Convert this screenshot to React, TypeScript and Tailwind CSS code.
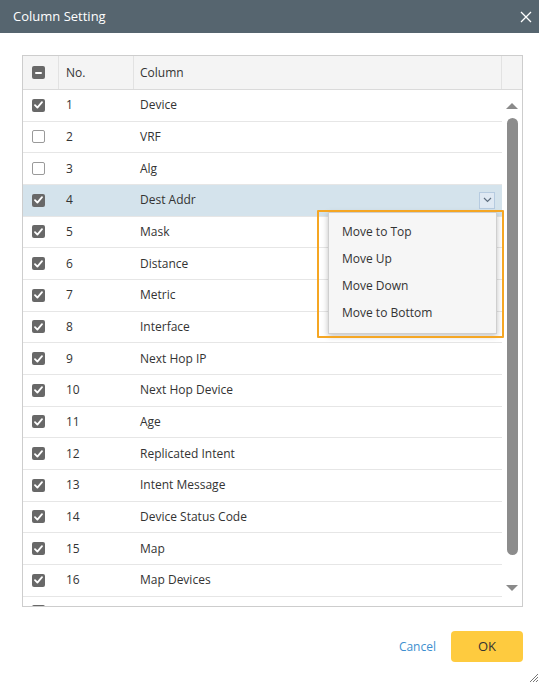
import React from 'react';

const rows: { no: number; name: string; checked: boolean }[] = [
  { no: 1, name: 'Device', checked: true },
  { no: 2, name: 'VRF', checked: false },
  { no: 3, name: 'Alg', checked: false },
  { no: 4, name: 'Dest Addr', checked: true },
  { no: 5, name: 'Mask', checked: true },
  { no: 6, name: 'Distance', checked: true },
  { no: 7, name: 'Metric', checked: true },
  { no: 8, name: 'Interface', checked: true },
  { no: 9, name: 'Next Hop IP', checked: true },
  { no: 10, name: 'Next Hop Device', checked: true },
  { no: 11, name: 'Age', checked: true },
  { no: 12, name: 'Replicated Intent', checked: true },
  { no: 13, name: 'Intent Message', checked: true },
  { no: 14, name: 'Device Status Code', checked: true },
  { no: 15, name: 'Map', checked: true },
  { no: 16, name: 'Map Devices', checked: true },
  { no: 17, name: '', checked: true },
];

const menuItems = ['Move to Top', 'Move Up', 'Move Down', 'Move to Bottom'];

// checkbox in the table, gray fill when checked
const Checkbox = ({ state }: { state: 'on' | 'off' | 'mixed' }) => {
  if (state === 'off') {
    return <div className="w-[13px] h-[13px] rounded-[2px] border border-[#9a9a9a] bg-white" />;
  }
  return (
    <div className="w-[13px] h-[13px] rounded-[2px] bg-[#686868] flex items-center justify-center">
      {state === 'on' ? (
        <svg width="9" height="8" viewBox="0 0 9 8" fill="none">
          <path d="M1 4.2 L3.4 6.6 L8 1.2" stroke="white" strokeWidth="1.8" strokeLinecap="round" strokeLinejoin="round" />
        </svg>
      ) : (
        <div className="w-[7px] h-[2px] bg-white rounded-[1px]" />
      )}
    </div>
  );
};

export default function App() {
  return (
    <div
      className="relative w-[539px] h-[683px] bg-white overflow-hidden text-[#333] text-[12px]"
      style={{ fontFamily: '"Open Sans", "Noto Sans", sans-serif' }}
    >
      {/* title bar */}
      <div className="h-[33px] bg-[#56656f] flex items-center justify-between pl-[13px] pr-[7px]">
        <span className="text-white text-[13px]">Column Setting</span>
        <svg width="12" height="12" viewBox="0 0 12 12" fill="none">
          <path d="M1 1 L11 11 M11 1 L1 11" stroke="white" strokeWidth="1.3" />
        </svg>
      </div>

      <div className="pl-[22px] pr-[16px] pt-[22px]">
        {/* table */}
        <div className="h-[552px] border border-[#cdcdcd] flex flex-col">
          <div className="h-[34px] shrink-0 flex bg-[#f4f4f4] border-b border-[#dadada]">
            <div className="w-[36px] flex items-center pl-[9px] border-r border-[#e2e2e2]">
              <Checkbox state="mixed" />
            </div>
            <div className="w-[75px] flex items-center pl-[7px] border-r border-[#e2e2e2]">No.</div>
            <div className="flex-1 flex items-center pl-[6px] border-r border-[#e2e2e2]">Column</div>
            <div className="w-[20px]" />
          </div>

          <div className="flex-1 flex min-h-0">
            <div className="flex-1 overflow-hidden">
              {rows.map((r) => (
                <div
                  key={r.no}
                  className={`h-[31.67px] flex border-b border-[#e6e6e6] ${r.no === 4 ? 'bg-[#d4e3ec]' : 'bg-white'}`}
                >
                  <div className="w-[36px] flex items-center pl-[9px]">
                    <Checkbox state={r.checked ? 'on' : 'off'} />
                  </div>
                  <div className="w-[75px] flex items-center pl-[7px]">{r.name ? r.no : ''}</div>
                  <div className="flex-1 flex items-center pl-[6px] pr-[7px] justify-between">
                    <span>{r.name}</span>
                    {r.no === 4 && (
                      <div className="w-[16px] h-[17px] border border-[#b6cbe0] bg-[#dfe9f3] flex items-center justify-center">
                        <svg width="9" height="6" viewBox="0 0 9 6" fill="none">
                          <path d="M1 1 L4.5 4.5 L8 1" stroke="#5f6f80" strokeWidth="1.2" />
                        </svg>
                      </div>
                    )}
                  </div>
                </div>
              ))}
            </div>

            {/* scrollbar */}
            <div className="w-[20px] bg-white flex flex-col items-center">
              <svg className="mt-[13px]" width="12" height="6" viewBox="0 0 12 6">
                <path d="M0 6 L6 0 L12 6 Z" fill="#8a8a8a" />
              </svg>
              <div className="mt-[9px] w-[11px] h-[437px] rounded-full bg-[#8c8c8c]" />
              <svg className="mt-[30px]" width="12" height="6" viewBox="0 0 12 6">
                <path d="M0 0 L12 0 L6 6 Z" fill="#8a8a8a" />
              </svg>
            </div>
          </div>
        </div>

        {/* footer */}
        <div className="flex justify-end items-center gap-[15px] mt-[24px]">
          <span className="text-[#3d8fd0] text-[12px]">Cancel</span>
          <button className="w-[72px] h-[31px] rounded-[4px] bg-[#fecb3f] text-[#333] text-[13px]">OK</button>
        </div>
      </div>

      {/* row context menu */}
      <div className="absolute left-[328px] top-[212px] w-[169px] bg-[#f6f6f6] border border-[#cfcfcf] shadow-[0_2px_6px_rgba(0,0,0,0.25)] pt-[5px] pb-[7px]">
        {menuItems.map((m) => (
          <div key={m} className="h-[27px] flex items-center pl-[13px] text-[12px]">
            {m}
          </div>
        ))}
      </div>
      <div className="absolute left-[317px] top-[210px] w-[187px] h-[128px] border-2 border-[#f5a623] rounded-[1px]" />

      {/* resize grip */}
      <svg className="absolute right-[1px] bottom-[1px]" width="8" height="8" viewBox="0 0 8 8">
        <path d="M8 0 L0 8 M8 3 L3 8 M8 6 L6 8" stroke="#777" strokeWidth="1" />
      </svg>
    </div>
  );
}
